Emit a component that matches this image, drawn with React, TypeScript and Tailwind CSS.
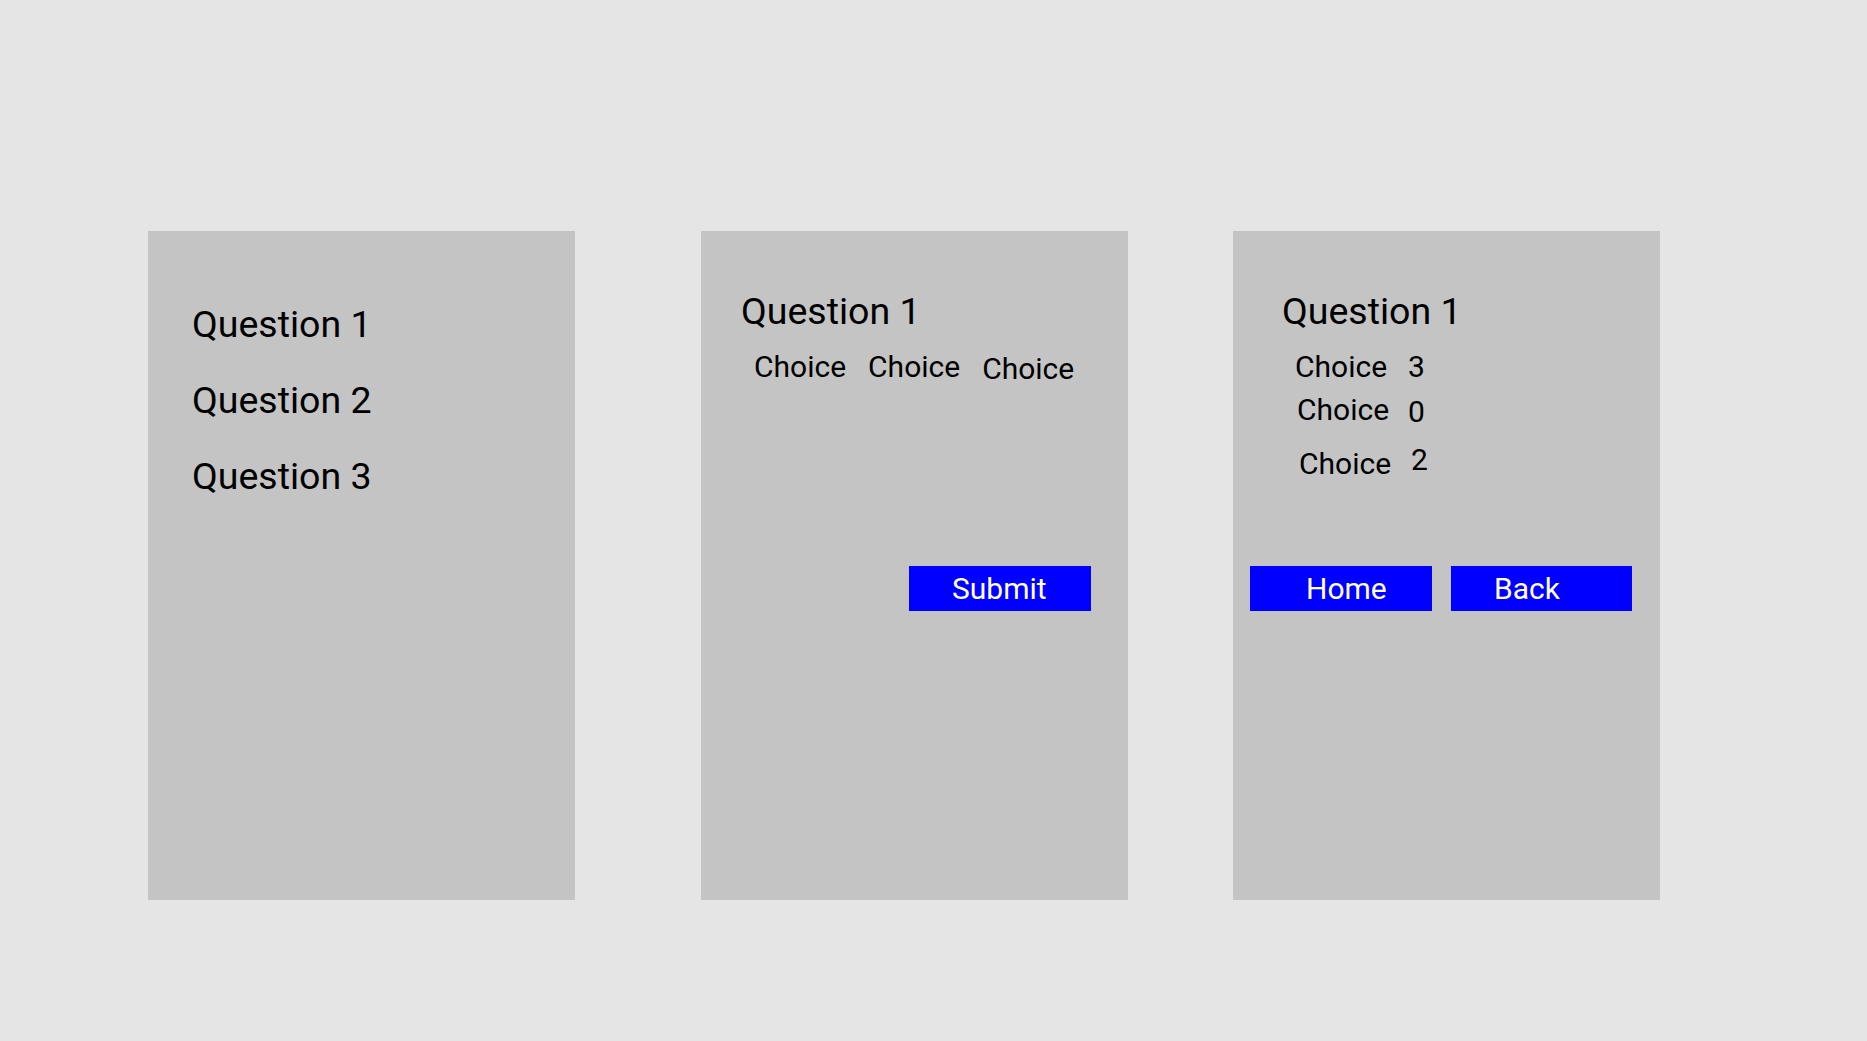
import React from "react";

const font = { fontFamily: "Roboto, 'Noto Sans', sans-serif" };

function Panel({ className = "", children }: { className?: string; children?: React.ReactNode }) {
  return (
    <div className={`w-[427px] h-[669px] bg-[#c4c4c4] shrink-0 ${className}`}>{children}</div>
  );
}

function BlueButton({ label, className = "" }: { label: string; className?: string }) {
  return (
    <div className={`h-[45px] bg-[#0000ff] text-white text-[30px] leading-[45px] ${className}`}>
      {label}
    </div>
  );
}

export default function App() {
  return (
    <div
      className="min-h-[1041px] w-full bg-[#e5e5e5] text-black flex items-start pt-[231px] pl-[148px]"
      style={font}
    >
      {/* list of questions */}
      <Panel>
        <div className="pt-[75px] pl-[44px] flex flex-col gap-[39px] text-[37.5px] leading-[37px]">
          <div>Question 1</div>
          <div>Question 2</div>
          <div>Question 3</div>
        </div>
      </Panel>

      {/* question with choices */}
      <Panel className="ml-[126px]">
        <div className="pt-[62px] pl-[40px] text-[37.5px] leading-[37px]">Question 1</div>
        <div className="mt-[22px] ml-[53px] flex items-start gap-[22px] text-[30px] leading-none">
          <div>Choice</div>
          <div>Choice</div>
          <div className="mt-[2px]">Choice</div>
        </div>
        <div className="mt-[182px] flex justify-end pr-[37px]">
          <BlueButton label="Submit" className="w-[182px] pl-[43px]" />
        </div>
      </Panel>

      {/* results */}
      <Panel className="ml-[105px]">
        <div className="pt-[62px] pl-[49px] text-[37.5px] leading-[37px]">Question 1</div>
        <div className="mt-[22px] flex flex-col text-[30px] leading-none">
          <div className="flex items-start ml-[62px]">
            <div className="w-[113px]">Choice</div>
            <div>3</div>
          </div>
          <div className="flex items-start ml-[64px] mt-[13px]">
            <div className="w-[111px]">Choice</div>
            <div className="mt-[2px]">0</div>
          </div>
          <div className="flex items-start ml-[66px] mt-[22px]">
            <div className="w-[112px]">Choice</div>
            <div className="-mt-[4px]">2</div>
          </div>
        </div>
        <div className="mt-[87px] pl-[17px] flex gap-[19px]">
          <BlueButton label="Home" className="w-[182px] pl-[56px]" />
          <BlueButton label="Back" className="w-[181px] pl-[43px]" />
        </div>
      </Panel>
    </div>
  );
}
